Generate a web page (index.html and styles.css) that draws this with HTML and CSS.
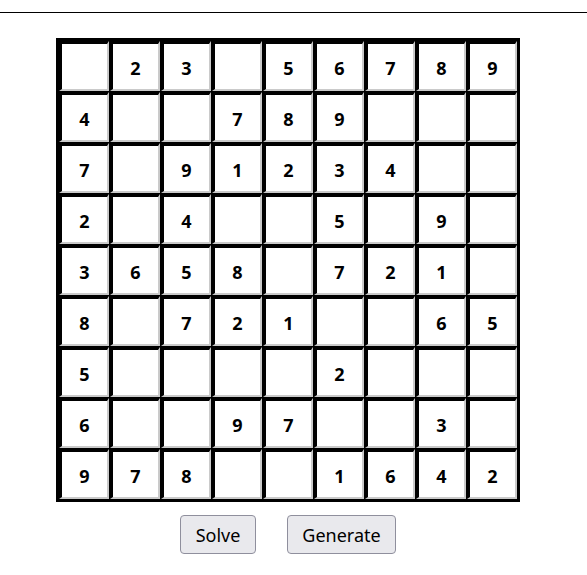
FILE: index.html
```html
<!DOCTYPE html>
<html>
<head>
<meta charset="utf-8">
<link rel="stylesheet" href="styles.css">
</head>
<body>
<div class="topbar"></div>
<main class="page">
  <div class="board">
    <div class="cell"></div><div class="cell">2</div><div class="cell">3</div><div class="cell"></div><div class="cell">5</div><div class="cell">6</div><div class="cell">7</div><div class="cell">8</div><div class="cell">9</div>
    <div class="cell">4</div><div class="cell"></div><div class="cell"></div><div class="cell">7</div><div class="cell">8</div><div class="cell">9</div><div class="cell"></div><div class="cell"></div><div class="cell"></div>
    <div class="cell">7</div><div class="cell"></div><div class="cell">9</div><div class="cell">1</div><div class="cell">2</div><div class="cell">3</div><div class="cell">4</div><div class="cell"></div><div class="cell"></div>
    <div class="cell">2</div><div class="cell"></div><div class="cell">4</div><div class="cell"></div><div class="cell"></div><div class="cell">5</div><div class="cell"></div><div class="cell">9</div><div class="cell"></div>
    <div class="cell">3</div><div class="cell">6</div><div class="cell">5</div><div class="cell">8</div><div class="cell"></div><div class="cell">7</div><div class="cell">2</div><div class="cell">1</div><div class="cell"></div>
    <div class="cell">8</div><div class="cell"></div><div class="cell">7</div><div class="cell">2</div><div class="cell">1</div><div class="cell"></div><div class="cell"></div><div class="cell">6</div><div class="cell">5</div>
    <div class="cell">5</div><div class="cell"></div><div class="cell"></div><div class="cell"></div><div class="cell"></div><div class="cell">2</div><div class="cell"></div><div class="cell"></div><div class="cell"></div>
    <div class="cell">6</div><div class="cell"></div><div class="cell"></div><div class="cell">9</div><div class="cell">7</div><div class="cell"></div><div class="cell"></div><div class="cell">3</div><div class="cell"></div>
    <div class="cell">9</div><div class="cell">7</div><div class="cell">8</div><div class="cell"></div><div class="cell"></div><div class="cell">1</div><div class="cell">6</div><div class="cell">4</div><div class="cell">2</div>
  </div>
  <div class="actions">
    <button class="btn btn-solve" type="button">Solve</button>
    <button class="btn btn-generate" type="button">Generate</button>
  </div>
</main>
</body>
</html>
```
FILE: styles.css
```css
html, body {
  margin: 0;
  padding: 0;
  background: #ffffff;
}
body {
  font-family: "Noto Sans", "Open Sans", sans-serif;
  color: #000;
}
.topbar {
  height: 12px;
  border-bottom: 1px solid #000;
}
.page {
  width: 576px;
  display: flex;
  flex-direction: column;
  align-items: center;
  padding-top: 25px;
}
.board {
  display: grid;
  grid-template-columns: repeat(9, 50px);
  grid-auto-rows: 50px;
  gap: 1px;
  border: 3px solid #000;
  background: #000;
}
.cell {
  box-sizing: border-box;
  background: #fff;
  border-style: solid;
  border-width: 3px 2px 2px 3px;
  border-color: #000 #cacaca #cacaca #000;
  display: flex;
  align-items: center;
  justify-content: center;
  font-weight: 700;
  font-size: 18px;
  padding-top: 2px;
}
.actions {
  display: flex;
  justify-content: center;
  gap: 31px;
  margin-top: 13px;
}
.btn {
  box-sizing: border-box;
  height: 39px;
  font-family: "Noto Sans", "Open Sans", sans-serif;
  font-size: 18px;
  color: #000;
  background: #e9e9ed;
  border: 1px solid #8f8f9d;
  border-radius: 4px;
  padding: 0;
}
.btn-solve { width: 76px; }
.btn-generate { width: 109px; }
```
